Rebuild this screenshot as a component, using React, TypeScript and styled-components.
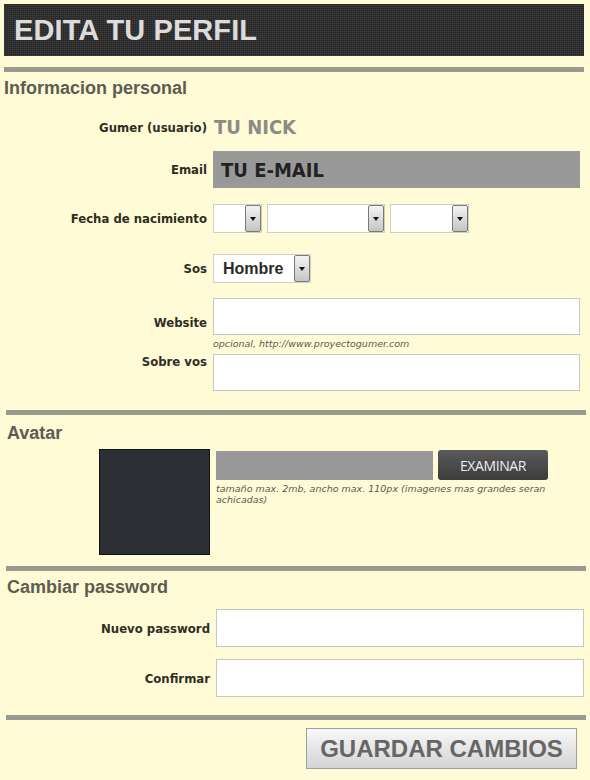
import React from 'react'
import styled, { createGlobalStyle } from 'styled-components';

const GlobalStyle = createGlobalStyle`
    body {
        margin: 0;
        background-color: #fffbd6;
        font-family: "Liberation Sans", Arial, sans-serif;
    }
`

const Page = styled.div`
    width: 590px;
    min-height: 780px;
    padding: 4px 0 0 0;
    box-sizing: border-box;
    background-color: #fffbd6;
`

const Header = styled.div`
    margin: 0 6px 0 4px;
    height: 52px;
    display: flex;
    align-items: center;
    padding-left: 10px;
    background-color: #262626;
    background-image:
        repeating-linear-gradient(0deg, rgba(255,255,255,0.05) 0 1px, transparent 1px 2px),
        repeating-linear-gradient(90deg, rgba(255,255,255,0.05) 0 1px, transparent 1px 2px);
    color: #dcdcdc;
    font-size: 29px;
    font-weight: bold;
    letter-spacing: 0.1px;
`

const Rule = styled.div<{ $left: number, $mt: number }>`
    height: 5px;
    background-color: #999a8e;
    margin-top: ${p => p.$mt}px;
    margin-left: ${p => p.$left}px;
    width: 580px;
`

const SectionTitle = styled.h2<{ $left: number, $mt: number }>`
    margin: ${p => p.$mt}px 0 0 ${p => p.$left}px;
    font-size: 18px;
    line-height: 20px;
    font-weight: bold;
    color: #5c5c50;
`

const Row = styled.div<{ $mt: number, $labelWidth: number, $align?: string }>`
    display: grid;
    grid-template-columns: ${p => p.$labelWidth}px 1fr;
    column-gap: 6px;
    align-items: ${p => p.$align || 'center'};
    margin-top: ${p => p.$mt}px;
`

const Label = styled.label<{ $pt?: number }>`
    text-align: right;
    font-family: "DejaVu Sans Condensed", "DejaVu Sans", sans-serif;
    font-weight: bold;
    font-size: 13px;
    color: #2e2e24;
    padding-top: ${p => p.$pt || 0}px;
`

const Nick = styled.div`
    font-family: "DejaVu Sans Condensed", "DejaVu Sans", sans-serif;
    font-weight: bold;
    font-size: 20px;
    color: #8c8c84;
    padding-left: 1px;
`

const TextBox = styled.div<{ $w: number, $h: number, $filled?: boolean }>`
    width: ${p => p.$w}px;
    height: ${p => p.$h}px;
    box-sizing: border-box;
    border: 1px solid ${p => p.$filled ? '#999' : '#c8c8c0'};
    background-color: ${p => p.$filled ? '#999999' : '#ffffff'};
    display: flex;
    align-items: center;
    padding-left: 7px;
    font-family: "DejaVu Sans Condensed", "DejaVu Sans", sans-serif;
    font-weight: bold;
    font-size: 20px;
    color: #222;
`

const Selects = styled.div`
    display: flex;
    gap: 5px;
`

const Select = styled.div<{ $w: number }>`
    width: ${p => p.$w}px;
    height: 29px;
    box-sizing: border-box;
    border: 1px solid #cfcfc6;
    background-color: #fff;
    display: flex;
    align-items: center;
    justify-content: space-between;
    padding-left: 9px;
    font-weight: bold;
    font-size: 16px;
    color: #2a2a2a;
`

const Arrow = styled.span`
    width: 16px;
    height: 27px;
    box-sizing: border-box;
    border: 1px solid #7a7a7a;
    border-radius: 2px;
    background: linear-gradient(#f4f4f4, #c4c4c4);
    display: flex;
    align-items: center;
    justify-content: center;
    &::after {
        content: '';
        border-left: 3px solid transparent;
        border-right: 3px solid transparent;
        border-top: 4px solid #111;
    }
`

const Hint = styled.div<{ $w?: number }>`
    font-family: "DejaVu Sans", sans-serif;
    font-style: italic;
    font-size: 9.5px;
    line-height: 11px;
    color: #5a5a52;
    margin-top: 3px;
    width: ${p => p.$w ? `${p.$w}px` : 'auto'};
`

const AvatarRow = styled.div`
    display: flex;
    align-items: flex-start;
    margin-top: 6px;
    padding-left: 99px;
    gap: 6px;
`

const AvatarImage = styled.div`
    width: 111px;
    height: 106px;
    box-sizing: border-box;
    border: 1px solid #111;
    background-color: #2b2e33;
`

const UploadColumn = styled.div`
    padding-top: 2px;
`

const Upload = styled.div`
    display: flex;
    align-items: center;
    gap: 5px;
`

const FileField = styled.div`
    width: 217px;
    height: 29px;
    background-color: #999999;
`

const BrowseButton = styled.button`
    width: 110px;
    height: 30px;
    margin-top: -1px;
    border: none;
    border-radius: 3px;
    background: linear-gradient(#5a5a5a, #3c3c3c);
    color: #ededed;
    font-family: "Open Sans", sans-serif;
    font-size: 14px;
    letter-spacing: -0.4px;
`

const Footer = styled.div`
    display: flex;
    justify-content: flex-end;
    padding-right: 13px;
    margin-top: 8px;
`

const SaveButton = styled.button`
    width: 271px;
    height: 41px;
    border: 1px solid #a0a09a;
    background: linear-gradient(#f8f8f8, #d4d4d4);
    color: #666;
    font-family: "Liberation Sans", Arial, sans-serif;
    font-weight: bold;
    font-size: 24px;
`

export default function App() {
    return (
        <Page>
            <GlobalStyle />
            <Header>EDITA TU PERFIL</Header>
            <Rule $left={4} $mt={11} />
            <SectionTitle $left={4} $mt={6}>Informacion personal</SectionTitle>

            <Row $mt={17} $labelWidth={207}>
                <Label>Gumer (usuario)</Label>
                <Nick>TU NICK</Nick>
            </Row>
            <Row $mt={12} $labelWidth={207}>
                <Label>Email</Label>
                <TextBox $w={367} $h={37} $filled>TU E-MAIL</TextBox>
            </Row>
            <Row $mt={16} $labelWidth={207}>
                <Label>Fecha de nacimiento</Label>
                <Selects>
                    <Select $w={49}><span /><Arrow /></Select>
                    <Select $w={118}><span /><Arrow /></Select>
                    <Select $w={79}><span /><Arrow /></Select>
                </Selects>
            </Row>
            <Row $mt={21} $labelWidth={207}>
                <Label>Sos</Label>
                <Selects>
                    <Select $w={98}>Hombre<Arrow /></Select>
                </Selects>
            </Row>
            <Row $mt={15} $labelWidth={207} $align="start">
                <Label $pt={17}>Website</Label>
                <div>
                    <TextBox $w={367} $h={37} />
                    <Hint>opcional, http://www.proyectogumer.com</Hint>
                </div>
            </Row>
            <Row $mt={5} $labelWidth={207} $align="start">
                <Label $pt={0}>Sobre vos</Label>
                <TextBox $w={367} $h={37} />
            </Row>

            <Rule $left={6} $mt={19} />
            <SectionTitle $left={7} $mt={8}>Avatar</SectionTitle>
            <AvatarRow>
                <AvatarImage />
                <UploadColumn>
                    <Upload>
                        <FileField />
                        <BrowseButton>EXAMINAR</BrowseButton>
                    </Upload>
                    <Hint $w={330}>tamaño max. 2mb, ancho max. 110px (imagenes mas grandes seran achicadas)</Hint>
                </UploadColumn>
            </AvatarRow>

            <Rule $left={6} $mt={11} />
            <SectionTitle $left={7} $mt={6}>Cambiar password</SectionTitle>
            <Row $mt={12} $labelWidth={210}>
                <Label>Nuevo password</Label>
                <TextBox $w={368} $h={38} />
            </Row>
            <Row $mt={12} $labelWidth={210}>
                <Label>Confirmar</Label>
                <TextBox $w={368} $h={38} />
            </Row>

            <Rule $left={6} $mt={18} />
            <Footer>
                <SaveButton>GUARDAR CAMBIOS</SaveButton>
            </Footer>
        </Page>
    );
}
